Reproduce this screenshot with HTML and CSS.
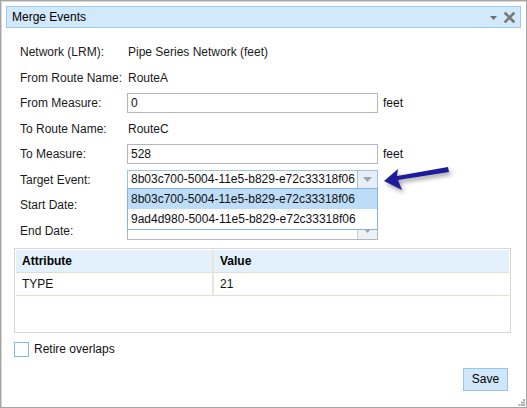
FILE: index.html
```html
<!DOCTYPE html>
<html lang="en">
<head>
  <meta charset="UTF-8" />
  <title>Merge Events</title>
  <link rel="stylesheet" href="styles.css">
</head>
<body>
  <div class="window">
    <div class="titlebar">
      <span class="title">Merge Events</span>
      <span class="tools">
        <svg class="tool-menu" width="7" height="4" viewBox="0 0 7 4"><path d="M0 0 H7 L3.5 4 Z" fill="#6f6f6f"/></svg>
        <svg class="tool-close" width="11" height="11" viewBox="0 0 11 11"><path d="M1.5 1.5 L9.5 9.5 M9.5 1.5 L1.5 9.5" stroke="#777" stroke-width="2.6" stroke-linecap="square"/></svg>
      </span>
    </div>

    <div class="content">
      <div class="form">
        <div class="row">
          <span class="label">Network (LRM):</span>
          <span class="value">Pipe Series Network (feet)</span>
        </div>
        <div class="row">
          <span class="label">From Route Name:</span>
          <span class="value">RouteA</span>
        </div>
        <div class="row">
          <span class="label">From Measure:</span>
          <input class="field" type="text" value="0" />
          <span class="unit">feet</span>
        </div>
        <div class="row">
          <span class="label">To Route Name:</span>
          <span class="value">RouteC</span>
        </div>
        <div class="row">
          <span class="label">To Measure:</span>
          <input class="field" type="text" value="528" />
          <span class="unit">feet</span>
        </div>
        <div class="row">
          <span class="label">Target Event:</span>
          <div class="combo open">
            <span class="combo-text">8b03c700-5004-11e5-b829-e72c33318f06</span>
            <span class="combo-btn"><svg width="9" height="5" viewBox="0 0 9 5"><path d="M0 0 H9 L4.5 5 Z" fill="#9aa7b3"/></svg></span>
            <div class="menu">
              <div class="menu-item selected">8b03c700-5004-11e5-b829-e72c33318f06</div>
              <div class="menu-item">9ad4d980-5004-11e5-b829-e72c33318f06</div>
            </div>
          </div>
        </div>
        <div class="row">
          <span class="label">Start Date:</span>
          <div class="combo">
            <span class="combo-text"></span>
            <span class="combo-btn"><svg width="9" height="5" viewBox="0 0 9 5"><path d="M0 0 H9 L4.5 5 Z" fill="#9aa7b3"/></svg></span>
          </div>
        </div>
        <div class="row">
          <span class="label">End Date:</span>
          <div class="combo">
            <span class="combo-text"></span>
            <span class="combo-btn"><svg width="9" height="5" viewBox="0 0 9 5"><path d="M0 0 H9 L4.5 5 Z" fill="#9aa7b3"/></svg></span>
          </div>
        </div>
      </div>

      <div class="grid">
        <table>
          <thead>
            <tr><th class="col-attr">Attribute</th><th>Value</th></tr>
          </thead>
          <tbody>
            <tr><td class="col-attr">TYPE</td><td>21</td></tr>
          </tbody>
        </table>
      </div>

      <label class="check">
        <span class="box"></span>
        <span>Retire overlaps</span>
      </label>

      <div class="actions">
        <button class="btn">Save</button>
      </div>
    </div>

    <svg class="callout" width="80" height="34" viewBox="0 0 80 34">
      <path d="M2 15 L16 3 L15 10 L66 1 L67 6 L16 14 L20 24 Z" fill="#1c1c9c"/>
    </svg>

    <svg class="grip" width="7" height="7" viewBox="0 0 7 7">
      <rect x="5" y="0" width="2" height="2" fill="#b0b0b0"/>
      <rect x="3" y="2.5" width="2" height="2" fill="#b0b0b0"/>
      <rect x="5" y="2.5" width="2" height="2" fill="#b0b0b0"/>
      <rect x="0.5" y="5" width="2" height="2" fill="#b0b0b0"/>
      <rect x="3" y="5" width="2" height="2" fill="#b0b0b0"/>
      <rect x="5" y="5" width="2" height="2" fill="#b0b0b0"/>
    </svg>
  </div>
</body>
</html>
```

FILE: styles.css
```css
html, body {
  margin: 0;
  padding: 0;
  background: #fff;
}
body {
  font-family: "Liberation Sans", Arial, sans-serif;
  font-size: 12px;
  color: #111;
}
.window {
  position: relative;
  box-sizing: border-box;
  width: 527px;
  height: 408px;
  border: 1px solid #a5a5a5;
  box-shadow: inset 1px 1px 0 #d6d6d6;
  padding: 5px 5px 5px 5px;
  background: #fff;
}
.titlebar {
  display: flex;
  align-items: center;
  justify-content: space-between;
  box-sizing: border-box;
  height: 22px;
  background: #d2e8fb;
  border: 1px solid #9ccbf1;
  padding: 0 5px 0 5px;
}
.title {
  color: #000;
}
.tools {
  display: flex;
  align-items: center;
  gap: 7px;
}
.tool-menu {
  margin-top: 1px;
}
.content {
  padding: 0 10px 0 8px;
}
.form {
  display: flex;
  flex-direction: column;
  gap: 5.5px;
  margin-top: 14px;
  padding-left: 6px;
}
.row {
  display: flex;
  align-items: center;
  height: 20px;
}
.label {
  width: 108px;
  flex-shrink: 0;
  color: #1a1a1a;
}
.value {
  color: #1a1a1a;
}
.field {
  box-sizing: border-box;
  width: 251px;
  height: 20px;
  margin: 0 0 0 -1px;
  padding: 0 3px;
  border: 1px solid #b4b7bf;
  font: inherit;
  color: #111;
  outline: none;
}
.unit {
  margin-left: 5px;
}
.combo {
  position: relative;
  display: flex;
  box-sizing: border-box;
  width: 251px;
  height: 19px;
  margin-left: -1px;
  border: 1px solid #b4b7bf;
}
.combo.open {
  border-color: #9cc2e6;
  z-index: 2;
}
.combo-text {
  flex: 1;
  padding-left: 3px;
  line-height: 17px;
  white-space: nowrap;
}
.combo-btn {
  display: flex;
  align-items: center;
  justify-content: center;
  width: 19px;
  border-left: 1px solid #c8ccd2;
  background: #eef1f4;
}
.combo.open .combo-btn {
  border-left-color: #9cc2e6;
  background: #e7eef5;
}
.menu {
  position: absolute;
  left: -1px;
  top: 17px;
  box-sizing: border-box;
  width: 251px;
  background: #fff;
  border: 1px solid #86b4e2;
}
.menu-item {
  height: 20px;
  line-height: 20px;
  padding-left: 3px;
  white-space: nowrap;
}
.menu-item.selected {
  background: #bcdcf7;
}
.grid {
  box-sizing: border-box;
  height: 85px;
  margin-top: 7px;
  border: 1px solid #d6d6d6;
  padding: 1px;
}
.grid table {
  width: 100%;
  border-collapse: collapse;
}
.grid th {
  height: 22px;
  padding: 0 6px;
  text-align: left;
  font-weight: bold;
  color: #000;
  background: #e3f1fc;
  border-bottom: 1px solid #e6ddd1;
}
.grid td {
  height: 22px;
  padding: 0 6px;
  border-bottom: 1px solid #e6ddd1;
}
.grid .col-attr {
  width: 184px;
  border-right: 2px solid #ebe4da;
}
.check {
  display: flex;
  align-items: center;
  gap: 5px;
  margin-top: 9px;
}
.box {
  box-sizing: border-box;
  width: 15px;
  height: 15px;
  border: 1px solid #7db8ea;
  background: #fff;
}
.actions {
  display: flex;
  justify-content: flex-end;
  margin-top: 11px;
  margin-right: 3px;
}
.btn {
  box-sizing: border-box;
  width: 45px;
  height: 23px;
  background: #cfe6fb;
  border: 1px solid #94c6f0;
  font: inherit;
  color: #000;
  padding: 0;
}
.callout {
  position: absolute;
  left: 381px;
  top: 165px;
  filter: drop-shadow(2px 3px 2px rgba(0, 0, 0, 0.35));
}
.grip {
  position: absolute;
  right: 1px;
  bottom: 1px;
}
```
